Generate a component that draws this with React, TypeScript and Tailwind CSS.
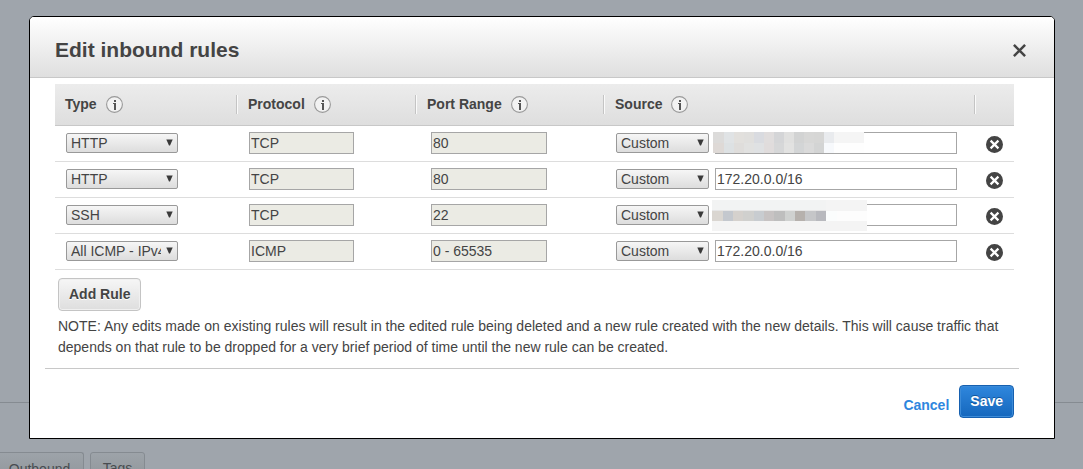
import React, { useState } from 'react';

interface Rule {
  id: number;
  type: string;
  protocol: string;
  portRange: string;
  sourceType: string;
  source: string;
  mask?: 'short' | 'tall';
}

const INITIAL_RULES: Rule[] = [
  { id: 1, type: 'HTTP', protocol: 'TCP', portRange: '80', sourceType: 'Custom', source: '', mask: 'short' },
  { id: 2, type: 'HTTP', protocol: 'TCP', portRange: '80', sourceType: 'Custom', source: '172.20.0.0/16' },
  { id: 3, type: 'SSH', protocol: 'TCP', portRange: '22', sourceType: 'Custom', source: '', mask: 'tall' },
  { id: 4, type: 'All ICMP - IPv4', protocol: 'ICMP', portRange: '0 - 65535', sourceType: 'Custom', source: '172.20.0.0/16' },
];

const TYPES = ['HTTP', 'HTTPS', 'SSH', 'All TCP', 'All ICMP - IPv4'];
const SOURCES = ['Custom', 'Anywhere', 'My IP'];

const SHORT_MASK = [
  ['#dcdbda', '#e0e3e5', '#e2e0dd', '#e0dfdd', '#d9dbe0', '#e0dddd', '#d4d5d7', '#e0e0df', '#d2d3d3', '#d7d7d6', '#d6d6d5', '#e9ebee'],
  ['#ded9d6', '#dde1e3', '#dfdddb', '#e1e1e0', '#dfe1e3', '#e0dcdc', '#d6d7d8', '#e2e2e1', '#d3d5d6', '#dadada', '#d3d4d4', '#f7f9fc'],
];
const TALL_MASK = ['#dad6d1', '#c4c8ce', '#d5d1cd', '#d0d0ce', '#c8ccd0', '#c7c3c3', '#bebebe', '#cfd1d0', '#b6b1ad', '#c5c6c8', '#b8b9be', '#fbfdfd'];

function Mask({ kind }: { kind: 'short' | 'tall' }) {
  if (kind === 'short') {
    return (
      <svg className="absolute -left-0.5 top-0" width="151" height="21" shapeRendering="crispEdges" aria-hidden="true">
        <rect width="151" height="11" fill="#f5f5f5" />
        <rect y="11" width="151" height="10" fill="#fefefe" />
        {SHORT_MASK.map((row, r) =>
          row.map((fill, c) => (
            <rect key={`${r}-${c}`} x={c === 0 ? 0 : c * 10 + 1} y={r * 11} width={c === 0 ? 11 : 10} height={r === 0 ? 11 : 10} fill={fill} />
          ))
        )}
      </svg>
    );
  }
  return (
    <svg className="absolute -left-[3px] -top-1" width="155" height="31" shapeRendering="crispEdges" aria-hidden="true">
      <rect width="155" height="31" fill="#f4f4f4" />
      <rect width="114" height="10" fill="#f2f3f3" />
      <rect y="10" width="114" height="1" fill="#e6e6e6" />
      <rect x="114" y="11" width="41" height="10" fill="#fdfdfd" />
      {TALL_MASK.map((fill, c) => (
        <rect key={c} x={c === 0 ? 0 : Math.round(c * 10.3 + 0.5)} y="11" width="11" height="10" fill={fill} />
      ))}
    </svg>
  );
}

function InfoIcon() {
  return (
    <svg width="17" height="17" viewBox="0 0 17 17" aria-hidden="true">
      <circle cx="8.5" cy="8.5" r="7.9" fill="#f2f2f2" stroke="#999" strokeWidth="1.1" />
      <rect x="8" y="4" width="2" height="2" fill="#555" />
      <path d="M7 7h3v7H8V8H7z" fill="#555" />
    </svg>
  );
}

function HeaderCell({ label, first = false }: { label: string; first?: boolean }) {
  return (
    <th className="h-[42px] border-b border-[#c8c8c8] p-0 text-left font-bold">
      <div className={`flex h-[19px] items-center gap-[9px] border-r border-[#c4c4c4] shadow-[1px_0_0_#fafafa] ${first ? 'pl-2.5' : 'pl-[11px]'}`}>
        <span className="pb-0.5">{label}</span>
        <button type="button" aria-label={`About ${label}`}>
          <InfoIcon />
        </button>
      </div>
    </th>
  );
}

interface DropdownProps {
  label: string;
  value: string;
  options: string[];
  className: string;
  onChange: (value: string) => void;
}

function Dropdown({ label, value, options, className, onChange }: DropdownProps) {
  return (
    <div className={`relative h-5 ${className}`}>
      <select
        aria-label={label}
        value={value}
        onChange={(e) => onChange(e.target.value)}
        className="block h-5 w-full appearance-none rounded-[2px] border border-[#999] bg-linear-to-b from-[#f6f6f6] to-[#dddddd] pl-1 pr-4 text-sm leading-[18px]"
      >
        {options.map((o) => (
          <option key=
{o}>{o}</option>
        ))}
      </select>
      <svg className="pointer-events-none absolute right-[5px] top-[6px]" width="7" height="7" viewBox="0 0 7 7" aria-hidden="true">
        <path d="M.3 .5h6.4L4 6.5H3z" fill="#3a3a3a" />
      </svg>
    </div>
  );
}

export default function App() {
  const [rules, setRules] = useState<Rule[]>(INITIAL_RULES);

  const update = (id: number, patch: Partial<Rule>) => {
    setRules((prev) => prev.map((r) => (r.id === id ? { ...r, ...patch } : r)));
  };

  const addRule = () => {
    setRules((prev) => [
      ...prev,
      { id: Date.now(), type: 'HTTP', protocol: 'TCP', portRange: '80', sourceType: 'Custom', source: '' },
    ]);
  };

  const fieldClass = 'block h-[22px] rounded-none border border-[#a6a6a6] px-px text-sm leading-5';

  return (
    <div className="relative flex h-screen flex-col overflow-hidden bg-[#9fa5ac] font-['Liberation_Sans',Arial,sans-serif] text-sm text-[#444]">
      {/* page behind the dialog */}
      <div className="h-[403px] shrink-0 border-b border-[#858b91]" />
      <div className="mt-[49px] flex gap-1.5 text-[#484c50]">
        <button type="button" className="h-8 w-[84px] rounded-tr-[3px] border-r border-t border-[#858b91] bg-linear-to-b from-[#9da3a9] to-[#8f9499] pr-1">
          Outbound
        </button>
        <button type="button" className="h-8 w-[55px] rounded-t-[3px] border border-[#858b91] bg-linear-to-b from-[#9da3a9] to-[#8f9499]">
          Tags
        </button>
      </div>

      <div className="absolute inset-0 pl-[29px] pr-7 pt-4">
        <div role="dialog" aria-labelledby="dialog-title" className="rounded-t-[5px] border border-black bg-white">
          <header className="flex h-[61px] items-center justify-between rounded-t-[4px] border-b border-[#c8c8c8] bg-linear-to-b from-white to-[#dfdfdf] pl-[25px] pr-7 pt-1.5">
            <h2 id="dialog-title" className="text-[21px] font-bold leading-6">Edit inbound rules</h2>
            <button type="button" aria-label="Close">
              <svg width="13" height="13" viewBox="0 0 13 13" aria-hidden="true">
                <path d="M.9 .9l11.2 11.2M12.1 .9L.9 12.1" stroke="#444" strokeWidth="2.5" />
              </svg>
            </button>
          </header>

          <div className="pb-5 pl-[25px] pr-10 pt-1.5">
            <table className="w-full table-fixed border-separate border-spacing-0">
              <colgroup>
                <col className="w-[182px]" />
                <col className="w-[179px]" />
                <col className="w-[188px]" />
                <col />
                <col className="w-[39px]" />
              </colgroup>
              <thead className="bg-linear-to-b from-[#ececec] to-[#dedede]">
                <tr>
                  <HeaderCell label="Type" first />
                  <HeaderCell label="Protocol" />
                  <HeaderCell label="Port Range" />
                  <HeaderCell label="Source" />
                  <th aria-label="Remove" className="border-b border-[#c8c8c8] p-0" />
                </tr>
              </thead>
              <tbody>
                {rules.map((rule) => (
                  <tr key={rule.id} className="[&>td]:h-9 [&>td]:border-b [&>td]:border-[#ddd]">
                    <td className="pb-0.5 pl-[11px]">
                      <Dropdown label="Type" value={rule.type} options={TYPES} className="w-28" onChange={(type) => update(rule.id, { type })} />
                    </td>
                    <td className="pb-0.5 pl-3">
                      <input aria-label="Protocol" readOnly value={rule.protocol} className={`${fieldClass} w-[105px] bg-[#ebebe4]`} />
                    </td>
                    <td className="pb-0.5 pl-[15px]">
                      <input aria-label="Port range" readOnly value={rule.portRange} className={`${fieldClass} w-[116px] bg-[#ebebe4]`} />
                    </td>
                    <td className="pb-0.5 pl-3 pr-[18px]">
                      <div className="flex items-center gap-1.5">
                        <Dropdown label="Source type" value={rule.sourceType} options={SOURCES} className="w-[93px] shrink-0" onChange={(sourceType) => update(rule.id, { sourceType })} />
                        <div className="relative flex-1">
                          <input
                            aria-label="Source"
                            value={rule.source}
                            onChange={(e) => update(rule.id, { source: e.target.value })}
                            className={`${fieldClass} w-full bg-white`}
                          />
                          {rule.mask && <Mask kind={rule.mask} />}
                        </div>
                      </div>
                    </td>
                    <td className="pl-[11px] pt-0.5">
                      <button
                        type="button"
                        aria-label="Remove rule"
                        className="block"
                        onClick={() => setRules((prev) => prev.filter((r) => r.id !== rule.id))}
                      >
                        <svg width="17" height="17" viewBox="0 0 17 17" aria-hidden="true">
                          <circle cx="8.5" cy="8.5" r="8.5" fill="#444" />
                          <path d="M4.6 4.6l7.8 7.8M12.4 4.6l-7.8 7.8" stroke="#fff" strokeWidth="2.2" />
                        </svg>
                      </button>
                    </td>
                  </tr>
                ))}
              </tbody>
            </table>

            <div className="pl-[3px] pt-2">
              <button
                type="button"
                onClick={addRule}
                className="block h-[33px] rounded-[4px] border border-[#c4c4c4] bg-linear-to-b from-[#f6f6f6] to-[#dedede] px-2.5 pb-0.5 font-bold shadow-[inset_0_0_0_1px_#f0f0f0] text-shadow-[0_1px_0_#fff]"
              >
                Add Rule
              </button>
              <p className="mt-[5px] leading-[21px]">
                NOTE: Any edits made on existing rules will result in the edited rule being deleted and a new rule created with the new details. This will cause traffic that depends on that rule to be dropped for a very brief period of time until the new rule can be created.
              </p>
            </div>

            <hr className="-ml-2.5 -mr-[5px] mt-2.5 border-[#c8c8c8]" />

            <div className="mt-4 flex items-center justify-end gap-2.5">
              <a href="#cancel" className="pt-1.5 font-bold text-[#2e86de]">Cancel</a>
              <button
                type="button"
                className="h-[33px] rounded-[4px] border border-[#1660b0] bg-linear-to-b from-[#2f87dd] to-[#1467bd] px-2.5 pb-0.5 font-bold text-white shadow-[inset_0_0_0_1px_#3c8bd8] text-shadow-[0_-1px_0_#10549c]"
              >
                Save
              </button>
            </div>
          </div>
        </div>
      </div>
    </div>
  );
}
